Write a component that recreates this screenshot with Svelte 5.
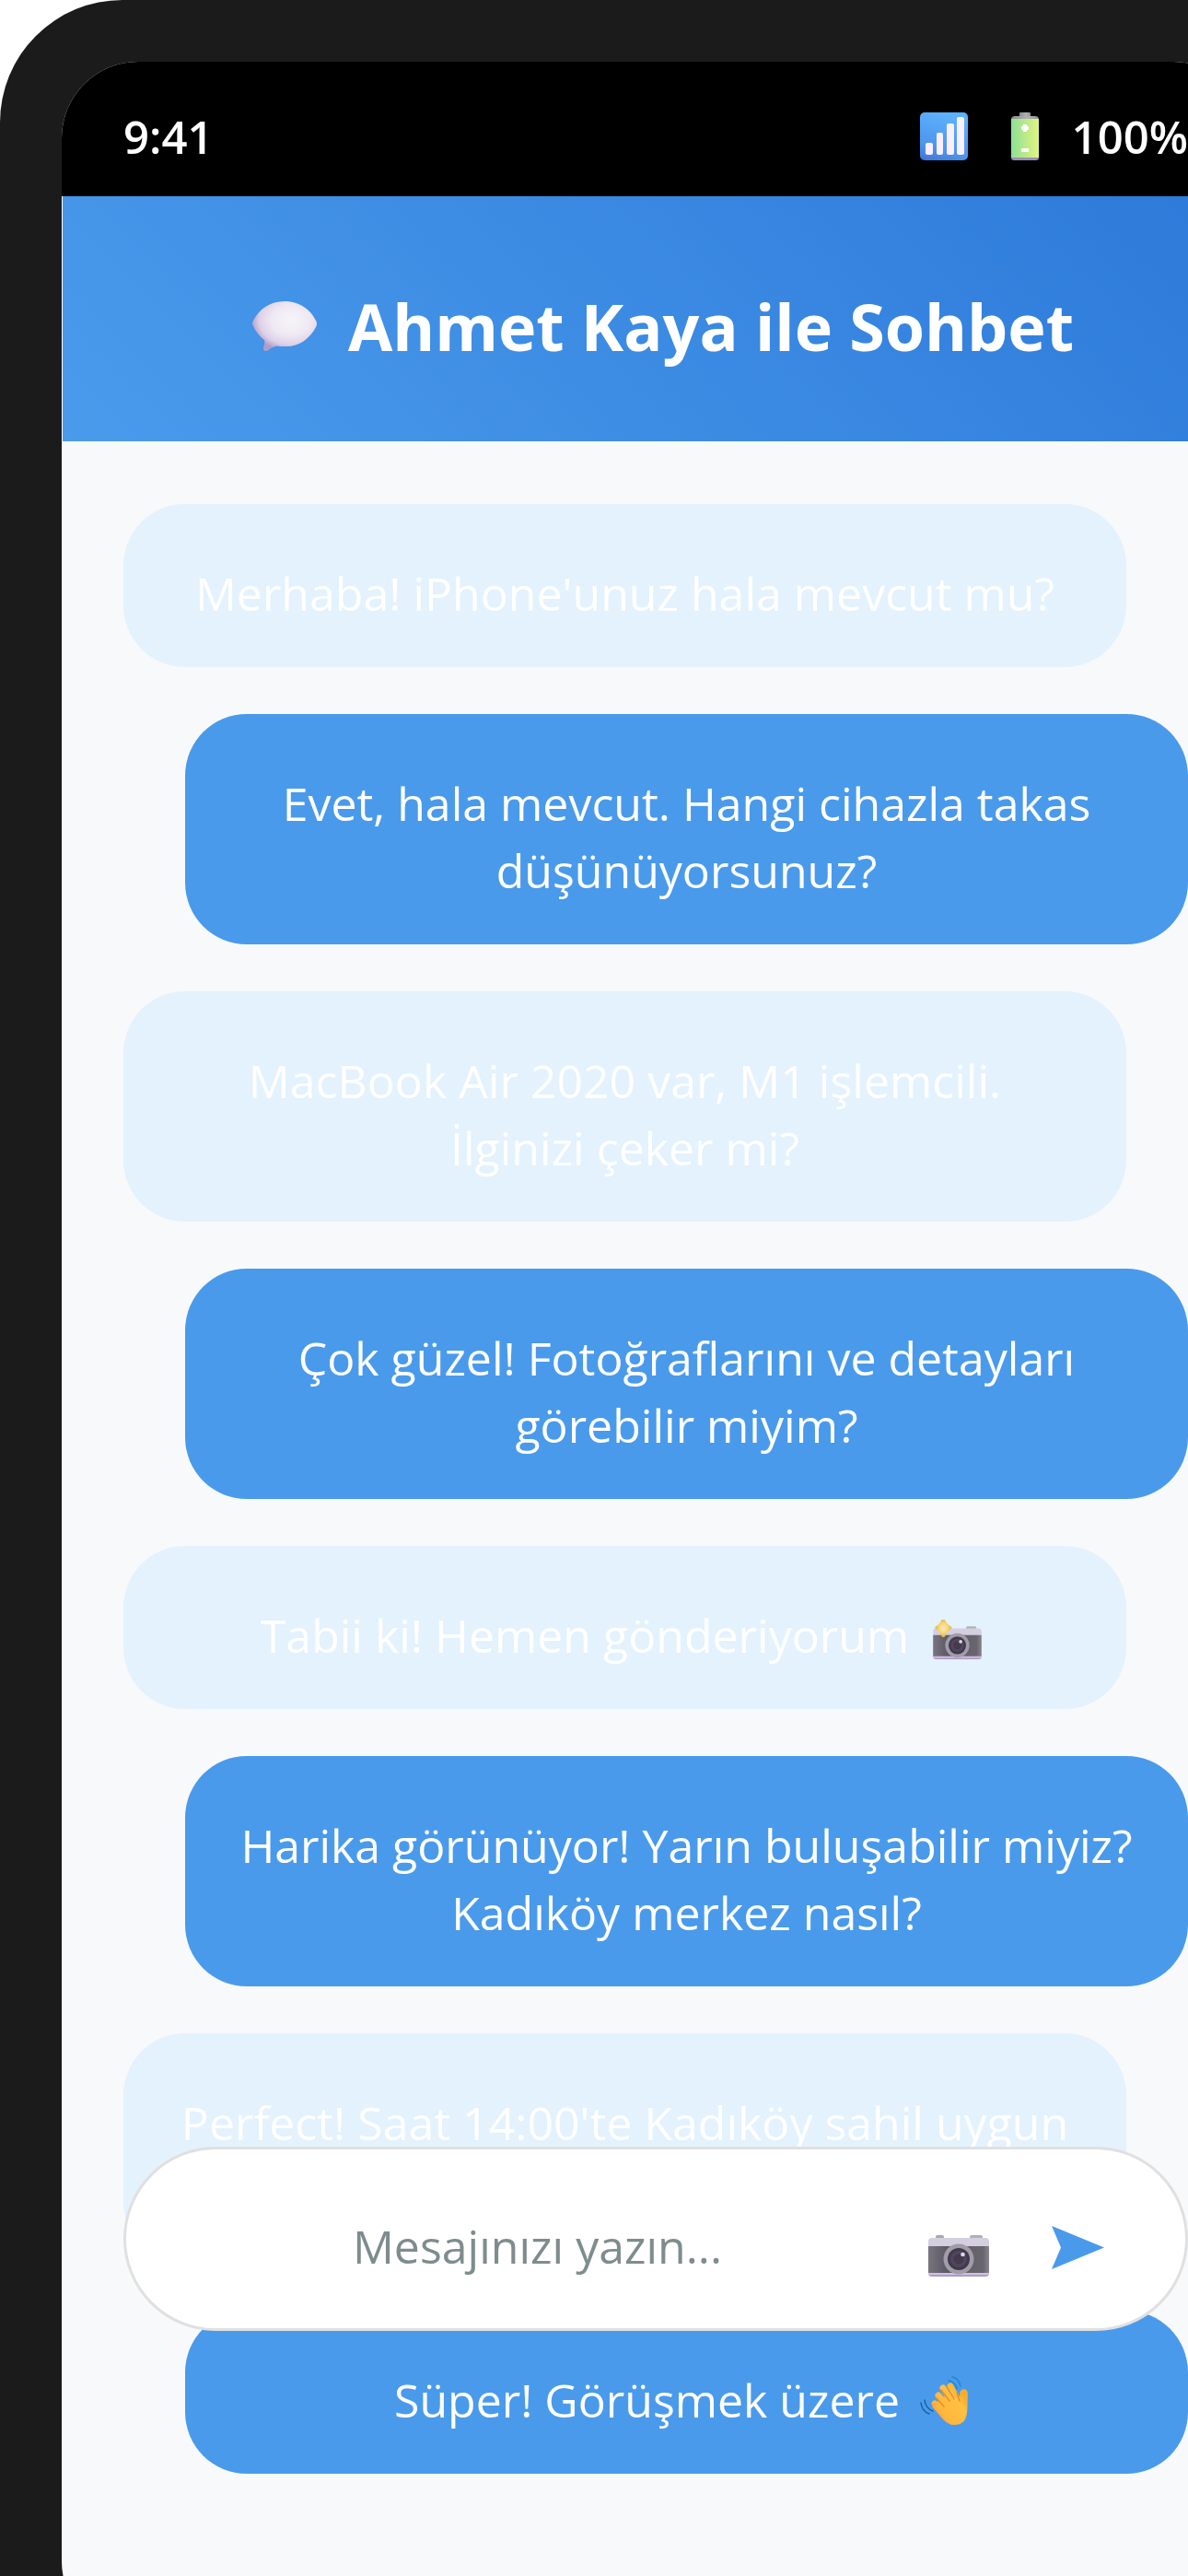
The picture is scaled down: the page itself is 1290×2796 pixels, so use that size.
<script>
  const messages = [
    { from: 'them', lines: ["Merhaba! iPhone'unuz hala mevcut mu?"] },
    { from: 'me', lines: ['Evet, hala mevcut. Hangi cihazla takas', 'düşünüyorsunuz?'] },
    { from: 'them', lines: ['MacBook Air 2020 var, M1 işlemcili.', 'İlginizi çeker mi?'] },
    { from: 'me', lines: ['Çok güzel! Fotoğraflarını ve detayları', 'görebilir miyim?'] },
    { from: 'them', lines: ['Tabii ki! Hemen gönderiyorum'], icon: 'flash' },
    { from: 'me', lines: ['Harika görünüyor! Yarın buluşabilir miyiz?', 'Kadıköy merkez nasıl?'] },
    { from: 'them', lines: ["Perfect! Saat 14:00'te Kadıköy sahil uygun", 'mu?'] },
    { from: 'me', lines: ['Süper! Görüşmek üzere'], icon: 'wave' }
  ];
  let draft = $state('');
</script>

{#snippet camera(flash)}
  <svg class={flash ? 'emoji' : 'camera'} viewBox={flash ? '0 -9 66 54' : '0 0 66 45'} aria-hidden="true">
    {#if !flash}<rect x="8" y="0" width="9" height="6" rx="2" fill="#a9aaa8" />{/if}
    <rect x="45" y="0" width="14" height="6" rx="2" fill="#b1b2b0" />
    <rect y="3" width="66" height="42" rx="4" fill="url(#cam-top)" />
    <rect y="12" width="66" height="29" fill="url(#cam-body)" />
    <rect x="0" y="41" width="66" height="2" fill="#d0c1e2" />
    <circle cx="33" cy="26" r="16.5" fill="#a09da8" />
    <circle cx="33" cy="26" r="12" fill="#42394d" />
    <circle cx="33" cy="26" r="9" fill="#51465e" />
    <circle cx="33" cy="26" r="5.5" fill="#433a4c" />
    <circle cx="37.5" cy="21" r="2.3" fill="#ded9e4" />
    {#if flash}
      <path d="M14-10Q16-9 18-5Q20-2 24 0Q27 2 24 4Q20 7 18 10Q16 15 14 15Q12 15 10 10Q8 6 4 4Q1 2 4 0Q8-2 10-6Q12-10 14-10Z" fill="url(#spark)" />
    {/if}
  </svg>
{/snippet}

{#snippet wave()}
  <svg class="emoji tall" viewBox="0 0 52 53" aria-hidden="true">
    <g fill="none" stroke-linecap="round" stroke-width="1.4">
      <path d="M35 1q7 1 9 10M31 5q7 1 9 9" stroke="#1689d8" />
      <path d="M1 29q1 9 9 12M5 26q1 9 9 12" stroke="#115fa5" />
    </g>
    <g fill="none" stroke="url(#hand)" stroke-linecap="round" stroke-width="7">
      <path d="M16 30L28 40M20 21L32 36M25 13L37 32M33 11L43 30" />
      <path d="M47.500 18.500L47 38" stroke-width="8.500" />
    </g>
    <path d="M15 33L24 22L38 24Q40 28 43 27L51.500 20L51 39Q50 53 37 53Q31 53 25 47L13 33Z" fill="url(#hand)" />
    <path d="M18 24l8 9M23 15l9 12M29 11l8 14M40 18q2 6 3 9" fill="none" stroke="#e58d25" stroke-width="1.300" stroke-linecap="round" />
  </svg>
{/snippet}

<svg class="defs" width="0" height="0" aria-hidden="true">
  <defs>
    <linearGradient id="cam-top" x2="0" y2="1">
      <stop offset="0" stop-color="#d4cfe0" /><stop offset=".8" stop-color="#d5cbe4" /><stop offset="1" stop-color="#a993c3" />
    </linearGradient>
    <linearGradient id="cam-body">
      <stop offset="0" stop-color="#78757f" /><stop offset=".3" stop-color="#5d5965" /><stop offset=".9" stop-color="#69656f" /><stop offset="1" stop-color="#88858d" />
    </linearGradient>
    <radialGradient id="spark">
      <stop offset="0" stop-color="#fbe6bf" /><stop offset=".5" stop-color="#f6d97a" /><stop offset="1" stop-color="#e2b23a" />
    </radialGradient>
    <linearGradient id="hand" gradientUnits="userSpaceOnUse" x1="12" y1="44" x2="46" y2="20">
      <stop offset="0" stop-color="#ff8a4e" /><stop offset=".3" stop-color="#ffb63c" /><stop offset=".8" stop-color="#ffc043" /><stop offset="1" stop-color="#f7ae2d" />
    </linearGradient>
  </defs>
</svg>

<div class="stage">
  <div class="phone">
    <div class="screen">
      <div class="status">
        <span>9:41</span>
        <div class="indicators">
          <svg class="signal" viewBox="0 0 52 52" aria-hidden="true">
            <defs>
              <linearGradient id="sig" x1="0" y1="1" x2=".3" y2="0">
                <stop offset="0" stop-color="#3d72d4" /><stop offset=".3" stop-color="#4c93ec" /><stop offset="1" stop-color="#5cb0fc" />
              </linearGradient>
            </defs>
            <rect width="52" height="52" rx="5" fill="url(#sig)" />
            <g fill="#fbeffe">
              <rect x="6" y="33" width="8" height="13" rx="2" />
              <rect x="18" y="22" width="7" height="24" rx="2" />
              <rect x="29" y="12" width="8" height="34" rx="2" />
              <rect x="40" y="5" width="8" height="41" rx="2" />
            </g>
          </svg>
          <svg class="battery" viewBox="0 0 30 52" aria-hidden="true">
            <defs>
              <linearGradient id="bat"><stop offset="0" stop-color="#8de095" /><stop offset="1" stop-color="#e2f47e" /></linearGradient>
              <linearGradient id="cap"><stop offset="0" stop-color="#8c8a8d" /><stop offset=".6" stop-color="#b4b2b4" /><stop offset="1" stop-color="#8f8d90" /></linearGradient>
            </defs>
            <rect x="9" width="12" height="7" rx="1" fill="url(#cap)" />
            <path d="M0 8Q0 4 4 4H26Q30 4 30 8Z" fill="url(#cap)" />
            <path d="M0 48H30V49Q30 52 27 52H3Q0 52 0 49Z" fill="#9d8db2" />
            <rect y="7" width="30" height="42" fill="url(#bat)" />
            <path d="M13 13h4v2h2v4h-2v2h-4v-2h-2v-4h2zM11 39h8v4h-8z" fill="#fff" />
          </svg>
          <span>100%</span>
        </div>
      </div>

      <header>
        <svg class="balloon" viewBox="0 0 70 54" aria-hidden="true">
          <defs>
            <radialGradient id="bub" cx=".6" cy=".38" r=".62">
              <stop offset="0" stop-color="#f7f5f9" /><stop offset=".5" stop-color="#efe8f3" /><stop offset=".8" stop-color="#ddd0e8" /><stop offset="1" stop-color="#af9dc9" />
            </radialGradient>
          </defs>
          <path d="M35 0C52 0 64 10 69 21Q71 24 69 28C62 41 51 49 37 49Q29 49 26 48.500Q21 50 16 54Q12 55 12 51Q14 45 13 42Q5 36 1 27Q-1 24 1 21C7 9 19 0 35 0Z" fill="url(#bub)" />
        </svg>
        <h1>Ahmet Kaya ile Sohbet</h1>
      </header>

      <main>
        {#each messages as m}
          <p class="bubble {m.from}">
            {#each m.lines as line, i}{#if i > 0}<br />{/if}{line}{/each}{#if m.icon === 'flash'}{@render camera(true)}{:else if m.icon === 'wave'}{@render wave()}{/if}
          </p>
        {/each}
      </main>

      <form class="composer" onsubmit={(e) => e.preventDefault()}>
        <input type="text" placeholder="Mesajınızı yazın..." aria-label="Mesajınızı yazın" bind:value={draft} />
        <button type="button" class="photo" aria-label="Fotoğraf">{@render camera(false)}</button>
        <button type="submit" aria-label="Gönder">
          <svg class="send" viewBox="0 0 57 47" aria-hidden="true"><path d="M0 0L57 23.500L0 47L10 23.500Z" fill="#4a9aeb" /></svg>
        </button>
      </form>
    </div>
  </div>
</div>

<style>
  :global(body) { background: #fff; }
  .defs { position: absolute; }
  .stage {
    height: 100vh;
    overflow: hidden;
    font-family: 'Open Sans', 'Noto Sans', sans-serif;
    font-size: 50px;
    line-height: 73px;
    color: #fff;
  }
  .phone {
    box-sizing: border-box;
    width: calc(100% + 134px);
    min-height: calc(100vh + 134px);
    padding: 67px;
    border-radius: 133px;
    background: #1b1b1b;
    display: flex;
  }
  .screen {
    position: relative;
    flex: 1;
    border-radius: 83px;
    overflow: hidden;
    background: #f8f9fb;
  }
  .status {
    display: flex;
    justify-content: space-between;
    align-items: center;
    box-sizing: border-box;
    height: 146px;
    padding: 16px 67px 0;
    background: #000;
    font-size: 49px;
    font-weight: 600;
  }
  .indicators { display: flex; align-items: center; }
  .signal { width: 52px; height: 52px; margin-right: 47px; }
  .battery { width: 30px; height: 52px; margin-right: 36px; }
  header {
    display: flex;
    justify-content: center;
    align-items: center;
    gap: 34px;
    box-sizing: border-box;
    height: 266px;
    padding: 16px 0 0 15px;
    border-left: 1px solid #fff;
    background: linear-gradient(45deg, #4a9bec, #2c79d9);
  }
  .balloon { width: 70px; height: 54px; }
  h1 { margin: 0; font-size: 70px; line-height: 96px; font-weight: 700; }
  main {
    display: flex;
    flex-direction: column;
    gap: 51px;
    padding: 68px 67px 0;
  }
  .bubble {
    margin: 0;
    padding: 61px 40px 43px;
    border-radius: 67px;
    text-align: center;
    white-space: nowrap;
  }
  .them { margin-right: 67px; background: #e3f2fd; }
  .me { margin-left: 67px; background: #4a9aeb; }
  .emoji { width: 53px; height: 43px; margin: 0 8px 0 26px; vertical-align: -7px; }
  .emoji.tall { width: 52px; height: 53px; margin: -10px 12px -10px 22px; vertical-align: 2px; }
  .composer {
    position: absolute;
    left: 67px;
    right: 67px;
    bottom: 333px;
    box-sizing: border-box;
    height: 200px;
    display: flex;
    align-items: center;
    padding: 18px 88px 0 50px;
    border: 3px solid #e0e0e0;
    border-radius: 100px;
    background: #fff;
  }
  input {
    flex: 1;
    min-width: 0;
    padding: 0 28px 2px 0;
    border: 0;
    outline: 0;
    background: none;
    font: inherit;
    text-align: center;
    color: #333;
  }
  input::placeholder { color: #7f8c8d; opacity: 1; }
  button { display: flex; padding: 0; border: 0; background: none; }
  .photo { margin-right: 68px; padding-top: 19px; }
  .camera { width: 66px; height: 45px; }
  .send { width: 57px; height: 47px; }
</style>
